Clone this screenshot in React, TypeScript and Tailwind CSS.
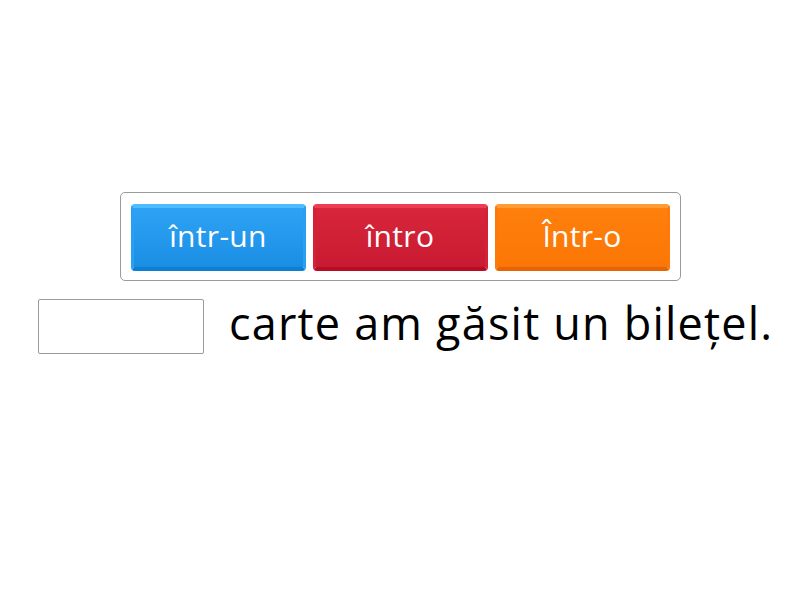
import React from 'react';

const options = [
  {
    label: 'într-un',
    className:
      'bg-gradient-to-b from-[#2ea3f5] to-[#1a8ee3] border-t-[#4dbcff] border-b-[#0c7fd2] border-x-[#28a0f2]',
  },
  {
    label: 'întro',
    className:
      'bg-gradient-to-b from-[#d8263c] to-[#c81a31] border-t-[#f03c52] border-b-[#b80c24] border-x-[#d32238]',
  },
  {
    label: 'Într-o',
    className:
      'bg-gradient-to-b from-[#ff800c] to-[#fb7606] border-t-[#ff9b33] border-b-[#e56505] border-x-[#fd7a08]',
  },
];

export default function App() {
  return (
    <div className="w-[800px] h-[600px] bg-white flex flex-col items-center pt-[192px] font-['Open_Sans',sans-serif]">
      <div className="flex gap-[7px] px-[10px] pt-[11px] pb-[9px] border border-[#9a9a9a] rounded-[5px]">
        {options.map(o => (
          <button
            key={o.label}
            className={`w-[175px] h-[67px] rounded-[4px] border-t-[4px] border-b-[4px] border-x-[3px] text-white text-[30px] font-medium tracking-[0.3px] leading-none pb-[3px] flex items-center justify-center ${o.className}`}
          >
            {o.label}
          </button>
        ))}
      </div>
      <div className="flex items-center w-full pl-[38px] mt-[18px]">
        <div className="w-[166px] h-[55px] border border-[#9a9a9a] rounded-[2px]" />
        <span className="ml-[25px] text-[45px] tracking-[1.2px] text-black leading-none pb-[8px] whitespace-nowrap">
          carte am găsit un bilețel.
        </span>
      </div>
    </div>
  );
}
